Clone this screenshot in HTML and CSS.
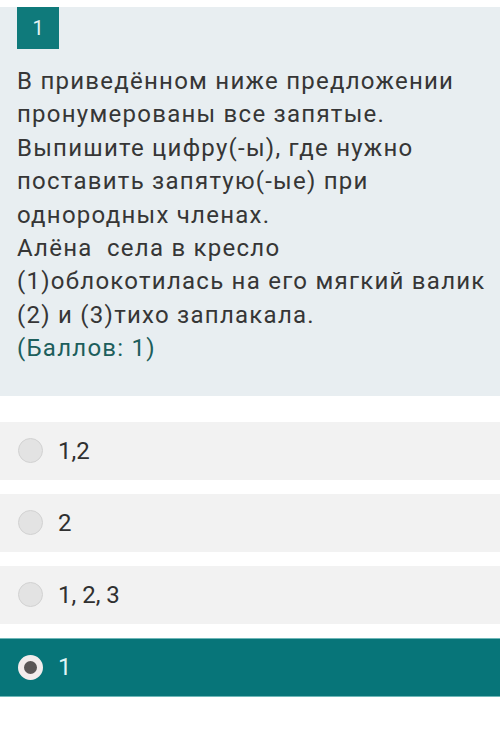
FILE: index.html
```html
<!DOCTYPE html>
<html lang="ru">
<head>
    <meta charset="UTF-8">
    <meta name="viewport" content="width=device-width, initial-scale=1.0">
    <title>Вопрос 1</title>
    <link rel="stylesheet" href="styles.css">
</head>
<body>

    <div class="question">
        <div class="question-num">1</div>
        <div class="question-text">
            В приведённом ниже предложении пронумерованы все запятые. Выпишите цифру(-ы), где нужно поставить запятую(-ые) при однородных членах.<br>
            Алёна&nbsp; села в кресло<br>
            (1)облокотилась на его мягкий валик (2) и (3)тихо заплакала.<br>
            <span class="points">(Баллов: 1)</span>
        </div>
    </div>

    <!-- варианты ответа -->
    <ul class="answers">
        <li class="answer"><span class="radio"></span>1,2</li>
        <li class="answer"><span class="radio"></span>2</li>
        <li class="answer"><span class="radio"></span>1, 2, 3</li>
        <li class="answer selected"><span class="radio"></span>1</li>
    </ul>

</body>
</html>
```

FILE: styles.css
```css
body {
    font-family: Roboto, 'Noto Sans', sans-serif;
    background: #fff;
    color: #333;
    margin: 0;
    padding: 0;
}

/* блок вопроса */
.question {
    margin-top: 7px;
    background-color: #e8eef1;
    padding: 0 12px 30px 17px;
}

.question-num {
    width: 42px;
    height: 42px;
    background-color: #0f7a7b;
    color: #e6f3f3;
    font-size: 20px;
    display: flex;
    align-items: center;
    justify-content: center;
}

.question-text {
    margin-top: 16px;
    font-size: 24px;
    letter-spacing: 1.25px;
    line-height: 33.4px;
    color: #363636;
}

.points {
    color: #1d5e5c;
}

/* варианты ответа */
.answers {
    list-style-type: none;
    padding: 0;
    margin: 26px 0 0;
    display: flex;
    flex-direction: column;
    gap: 14px;
}

.answer {
    height: 58px;
    background-color: #f2f2f2;
    display: flex;
    align-items: center;
    padding-left: 18px;
    font-size: 24px;
    color: #303030;
}

.radio {
    width: 23px;
    height: 23px;
    border-radius: 50%;
    background-color: #e3e3e3;
    border: 1px solid #d2d2d2;
    margin-right: 15px;
    flex-shrink: 0;
}

.answer.selected {
    background-color: #077579;
    color: #dff4f4;
    border-top: 1px solid #6fb8b8;
    border-bottom: 1px solid #6fb8b8;
    height: 57px;
}

.answer.selected .radio {
    background-color: #5b5656;
    border: 6px solid #f3ecec;
    width: 13px;
    height: 13px;
}
```
